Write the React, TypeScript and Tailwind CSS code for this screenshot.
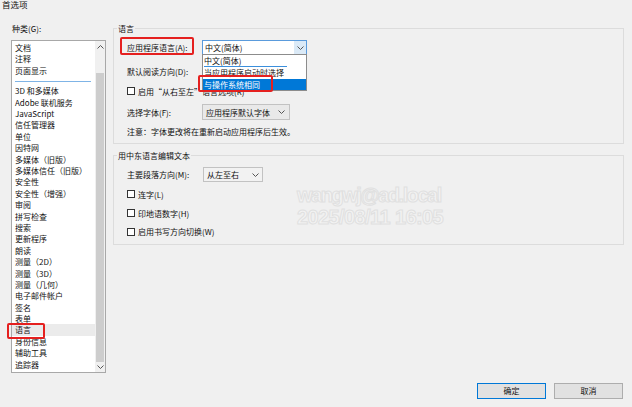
import React from "react";

const Chevron = ({ up = false }: { up?: boolean }) => (
  <svg width="7" height="4" viewBox="0 0 7 4">
    <path
      d={up ? "M0.5 3.5L3.5 0.5L6.5 3.5" : "M0.5 0.5L3.5 3.5L6.5 0.5"}
      fill="none"
      stroke="#555"
      strokeWidth="1"
    />
  </svg>
);

const Checkbox = ({ label }: { label: string }) => (
  <div className="flex items-center gap-[3px]">
    <span className="w-[8px] h-[8px] border border-[#333] bg-white" />
    <span>{label}</span>
  </div>
);

const topItems = ["文档", "注释", "页面显示"];
const items = [
  "3D 和多媒体",
  "Adobe 联机服务",
  "JavaScript",
  "信任管理器",
  "单位",
  "因特网",
  "多媒体（旧版）",
  "多媒体信任（旧版）",
  "安全性",
  "安全性（增强）",
  "审阅",
  "拼写检查",
  "搜索",
  "更新程序",
  "朗读",
  "测量（2D）",
  "测量（3D）",
  "测量（几何）",
  "电子邮件帐户",
  "签名",
  "表单",
  "语言",
  "身份信息",
  "辅助工具",
  "追踪器",
];

const App = () => {
  return (
    <div className="relative w-[632px] h-[407px] overflow-hidden bg-[#f0f0f0] text-[8px] leading-[11px] text-[#111] font-['Noto_Sans_CJK_SC',sans-serif]">
      <div className="h-[8px] pl-[2px] leading-[8px] text-[8.5px]">首选项</div>

      <div className="flex h-[365px]">
        {/* categories */}
        <div className="ml-[11px] w-[95px] flex flex-col">
          <div className="mt-[15px] pl-[1px]">种类(G):</div>
          <div className="mt-[6px] h-[333px] border border-[#a8a8a8] bg-white flex">
            <div className="flex-1 pt-[1px]">
              {topItems.map((t) => (
                <div key={t} className="h-[11.4px] leading-[11.4px] pl-[3px]">
                  {t}
                </div>
              ))}
              <div className="h-[9.1px] pt-[5px] pl-[3px]">
                <div className="h-[1px] w-[76px] bg-[#7fb4e6]" />
              </div>
              {items.map((t) => (
                <div
                  key={t}
                  className={
                    t === "语言"
                      ? "h-[11.4px] leading-[11.4px] pl-[3px] bg-[#ebebeb]"
                      : "h-[11.4px] leading-[11.4px] pl-[3px]"
                  }
                >
                  {t}
                </div>
              ))}
            </div>
            <div className="w-[10px] bg-[#f0f0f0] flex flex-col">
              <div className="h-[12px] flex items-center justify-center">
                <Chevron up />
              </div>
              <div className="h-[20px]" />
              <div className="h-[289px] mx-[1px] bg-[#cdcdcd]" />
              <div className="h-[10px] flex items-center justify-center">
                <Chevron />
              </div>
            </div>
          </div>
        </div>

        {/* settings */}
        <div className="ml-[7px] w-[511px] flex flex-col">
          <fieldset className="mt-[15px] border border-[#dcdcdc] px-[3px] pb-[6px] min-w-0">
            <legend className="px-[1px]">语言</legend>
            <div className="pl-[10px] flex flex-col">
              <div className="relative mt-[6px] flex h-[15px] items-center">
                <div className="w-[75px]">应用程序语言(A):</div>
                <div className="w-[105px] h-[15px] border border-[#5a9bdc] bg-white flex items-center justify-between">
                  <span className="pl-[2px]">中文(简体)</span>
                  <span className="h-full w-[12px] flex items-center justify-center bg-[#dbeaf7]">
                    <Chevron />
                  </span>
                </div>
                <div className="absolute left-[75px] top-[14px] w-[105px] h-[37px] border border-[#8c8c8c] bg-white flex flex-col">
                  <div className="relative h-[12px] leading-[12px] pl-[1px]">
                    中文(简体)
                    <div className="absolute left-[1px] bottom-0 h-[1px] w-[83px] bg-[#3b8fdc]" />
                  </div>
                  <div className="h-[12px] leading-[12px] pl-[1px]">当应用程序启动时选择</div>
                  <div className="h-[11px] leading-[11px] pl-[1px] bg-[#0078d7] text-white">
                    与操作系统相同
                  </div>
                </div>
              </div>
              <div className="mt-[8.5px] flex h-[15px] items-center">
                <div className="w-[75px]">默认阅读方向(D):</div>
              </div>
              <div className="mt-[5px] flex h-[15px] items-center">
                <Checkbox label="启用“从右至左”语言选项(R)" />
              </div>
              <div className="mt-[5.5px] flex h-[16px] items-center">
                <div className="w-[75px]">选择字体(F):</div>
                <div className="w-[88px] h-[16px] border border-[#c2c2c2] bg-[#e9e9e9] flex items-center justify-between pl-[3px] pr-[4px]">
                  <span>应用程序默认字体</span>
                  <Chevron />
                </div>
              </div>
              <div className="mt-[6px] h-[11px]">注意：字体更改将在重新启动应用程序后生效。</div>
            </div>
          </fieldset>

          <fieldset className="mt-[5.5px] border border-[#dcdcdc] px-[3px] pb-[7px] min-w-0">
            <legend className="px-[1px]">用中东语言编辑文本</legend>
            <div className="pl-[10px] flex flex-col">
              <div className="mt-[6.5px] flex h-[15px] items-center">
                <div className="w-[76px]">主要段落方向(M):</div>
                <div className="w-[60px] h-[15px] border border-[#c2c2c2] bg-[#f2f2f2] flex items-center justify-between pl-[3px] pr-[3px]">
                  <span>从左至右</span>
                  <Chevron />
                </div>
              </div>
              <div className="mt-[6.5px] h-[11px] flex items-center">
                <Checkbox label="连字(L)" />
              </div>
              <div className="mt-[8px] h-[11px] flex items-center">
                <Checkbox label="印地语数字(H)" />
              </div>
              <div className="mt-[7.5px] h-[11px] flex items-center">
                <Checkbox label="启用书写方向切换(W)" />
              </div>
            </div>
          </fieldset>
        </div>
      </div>

      <div className="mt-[10px] flex justify-end gap-[8px] pr-[9px]">
        <button className="w-[69px] h-[16px] border border-[#0078d7] bg-[#e1e1e1] leading-[14px]">
          确定
        </button>
        <button className="w-[69px] h-[16px] border border-[#adadad] bg-[#e1e1e1] leading-[14px]">
          取消
        </button>
      </div>

      {/* watermark */}
      <div className="absolute left-[297px] top-[184px] pointer-events-none font-['Liberation_Sans',sans-serif] font-bold text-[20px] leading-[22px] text-[#f3f3f3] [-webkit-text-stroke:1px_#e0e0e0]">
        <div className="tracking-[-1.5px]">wangwj@ad.local</div>
        <div className="tracking-[-0.6px]">2025/08/11 16:05</div>
      </div>

      {/* annotations */}
      <div className="absolute left-[120px] top-[37px] w-[74px] h-[18px] border-2 border-[#e5201f] rounded-[2px]" />
      <div className="absolute left-[198px] top-[75px] w-[75px] h-[17px] border-2 border-[#e5201f] rounded-[2px]" />
      <div className="absolute left-[7px] top-[323px] w-[38px] h-[16px] border-2 border-[#e5201f] rounded-[2px]" />
    </div>
  );
};

export default App;
